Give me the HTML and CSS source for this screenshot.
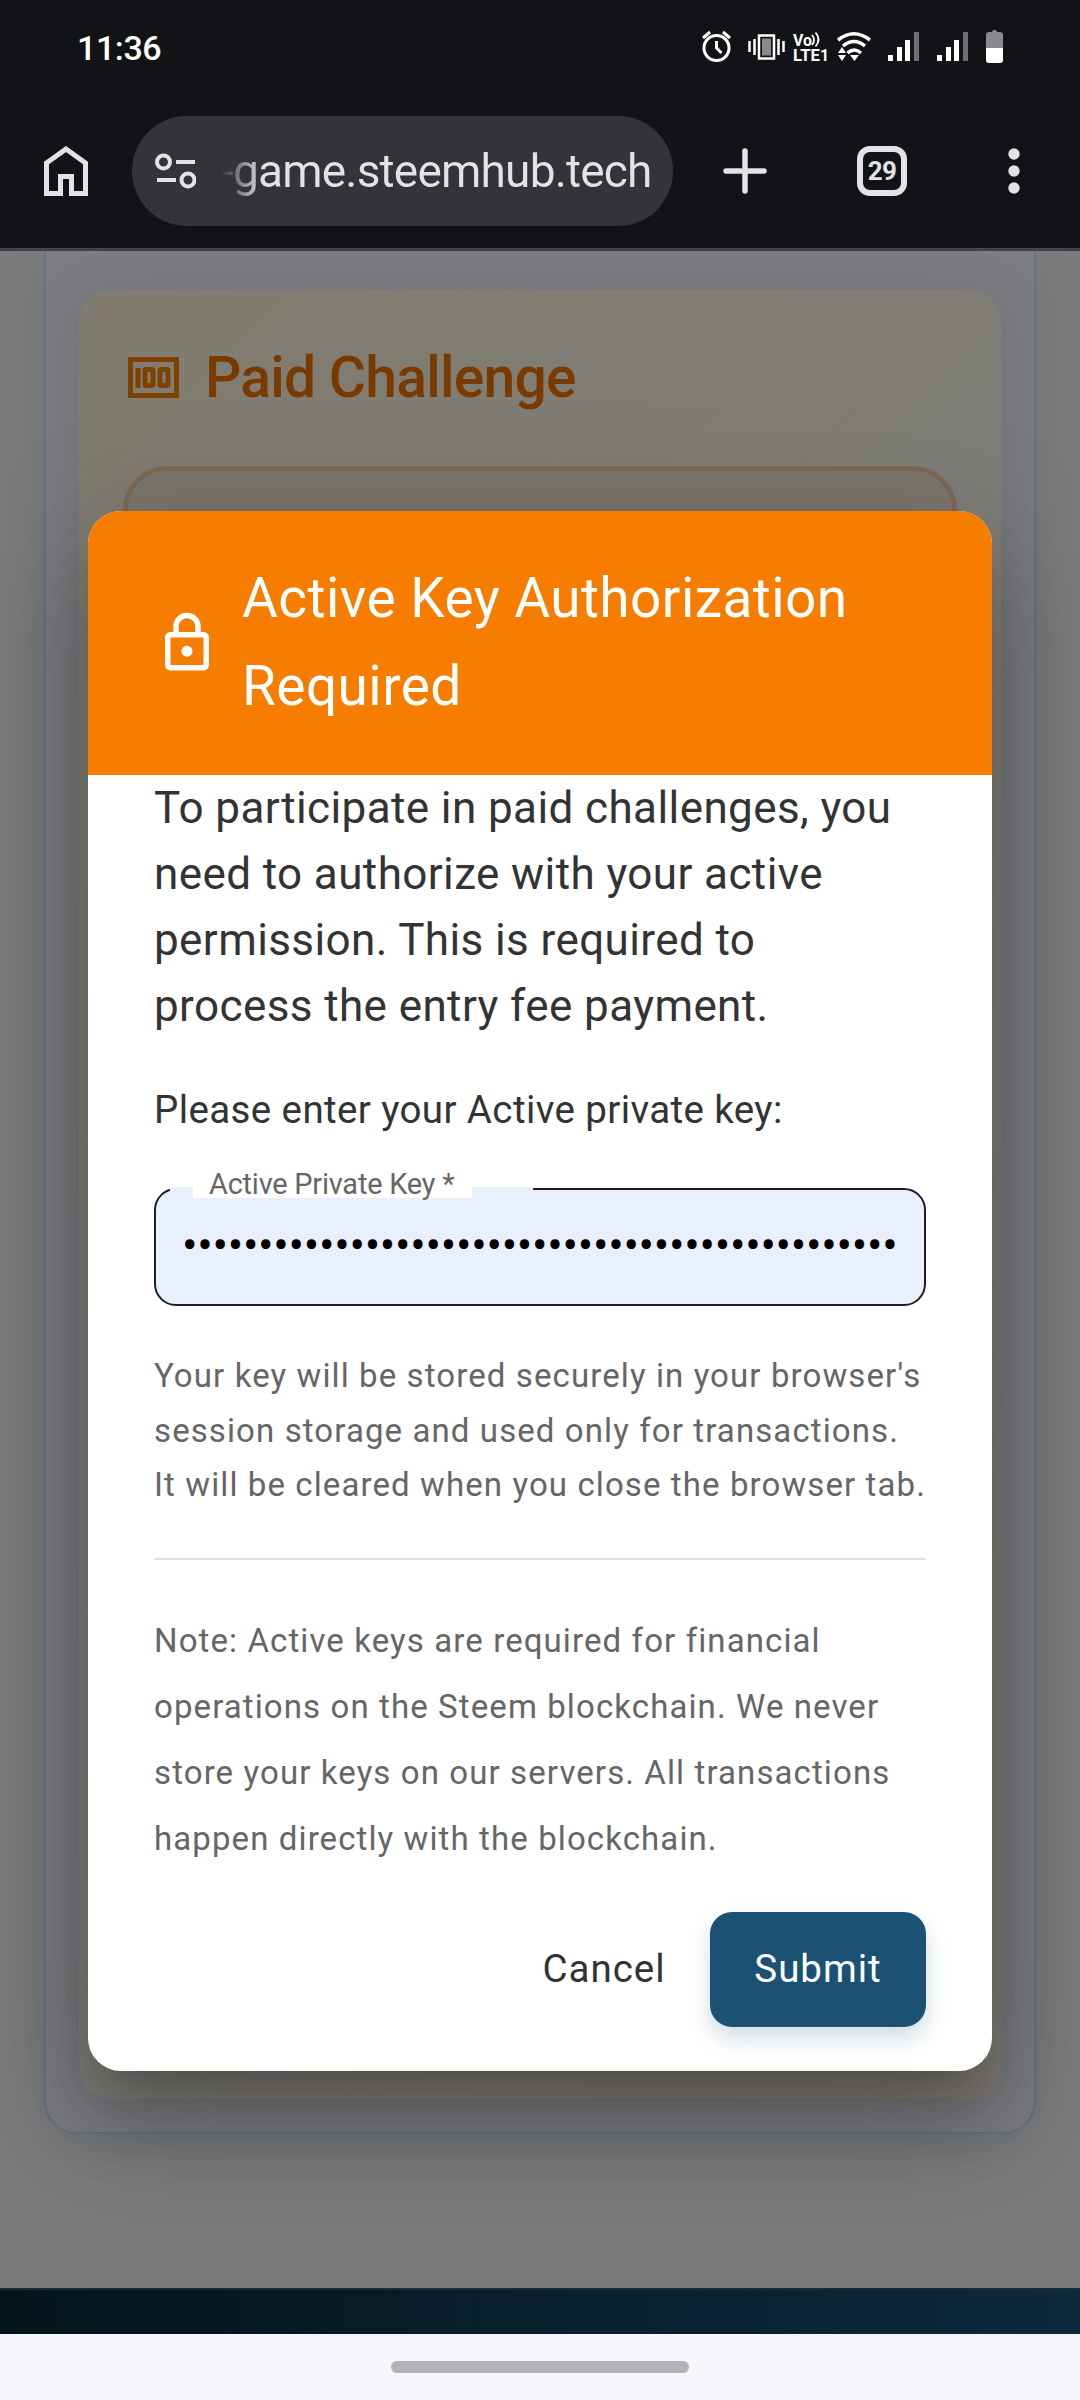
FILE: index.html
```
<!DOCTYPE html>
<html lang="en">

<head>
  <meta charset="UTF-8">
  <title>Paid Challenge</title>
  <link rel="stylesheet" href="styles.css">
</head>

<body>
  <div class="phone">
    <div class="status">
      <span class="time">11:36</span>
      <svg class="status-icons" width="310" height="40" viewBox="0 0 310 40" fill="none">
        <!-- alarm -->
        <g stroke="#fff" stroke-width="3">
          <circle cx="16.500" cy="18" r="12.500"/>
          <path d="M16.500 11v7l5 5M3 8l7-6M30 8l-7-6"/>
        </g>
        <!-- vibrate -->
        <rect x="59" y="5.500" width="15" height="23" stroke="#fff" stroke-width="2.500"/>
        <rect x="62" y="8.500" width="9" height="17" fill="#8a8a8c"/>
        <path d="M49.500 11v11M54.500 9v16M78.500 9v16M83.500 11v11" stroke="#fff" stroke-width="2.500"/>
        <!-- volte -->
        <text class="lte" x="93" y="15.500" textLength="19" lengthAdjust="spacingAndGlyphs">Vo</text>
        <path d="M112 5q4 5 0 10M115.500 2.500q6 7 0 14" stroke="#fff" stroke-width="1.800"/>
        <text class="lte" x="93" y="30.500" textLength="27" lengthAdjust="spacingAndGlyphs">LTE</text>
        <text class="lte" x="120" y="30.500">1</text>
        <!-- wifi -->
        <g stroke="#fff" stroke-width="3.500">
          <path d="M138 10q16-12.500 32 0M143 16q11-9 22 0M147.500 23q7-6 13.500 0"/>
        </g>
        <path d="M138 23l4-6 4 6zM138 25l4 6 4-6zM150 25l4.500 6 4.500-6z" fill="#fff"/>
        <!-- signal -->
        <path d="M188 25h5v6h-5zM197 17h5v14h-5zM205 10h5v21h-5zM237 25h5v6h-5zM246 17h5v14h-5zM254 10h5v21h-5z" fill="#fff"/>
        <path d="M214 2h5v29h-5zM263 2h5v29h-5z" fill="#707073"/>
        <!-- battery -->
        <path d="M286 18V5q0-3 3-3h3q0-2 2-2h1q2 0 2 2h3q3 0 3 3v13z" fill="#8a8a8c"/>
        <path d="M286 18h17v12q0 3-3 3h-11q-3 0-3-3z" fill="#fff"/>
      </svg>
    </div>

    <div class="toolbar">
      <svg class="home" width="44" height="50" viewBox="0 0 44 50">
        <path d="M2.500 47.500V17L22 3l19.500 14v30.500H27.500v-17h-11v17z" fill="none" stroke="#e3e2e8" stroke-width="5"/>
      </svg>
      <div class="address">
        <svg width="42" height="36" viewBox="0 0 42 36" fill="none" stroke="#e3e2e8" stroke-width="4">
          <circle cx="9.500" cy="9" r="6.500"/>
          <circle cx="34" cy="27" r="6.500"/>
          <path d="M22 9h19M3 27h19"/>
        </svg>
        <span class="url">-game.steemhub.tech</span>
      </div>
      <svg class="plus" width="44" height="46" viewBox="0 0 44 46">
        <path d="M22 3v40M3 23h38" stroke="#e3e2e8" stroke-width="5.500" stroke-linecap="round"/>
      </svg>
      <div class="tabs">29</div>
      <svg class="more" width="12" height="46" viewBox="0 0 12 46" fill="#e3e2e8">
        <circle cx="6" cy="6" r="5.700"/>
        <circle cx="6" cy="23" r="5.700"/>
        <circle cx="6" cy="40" r="5.700"/>
      </svg>
    </div>

    <div class="page">
      <div class="panel">
        <div class="challenge">
          <h2>
            <svg width="52" height="42" viewBox="0 0 52 42" fill="none" stroke="#7f4100">
              <rect x="3.500" y="2.500" width="46" height="36" stroke-width="5"/>
              <path d="M11 11v20" stroke-width="5"/>
              <rect x="18" y="12.500" width="8" height="16" rx="1" stroke-width="5"/>
              <rect x="33" y="12.500" width="8" height="16" rx="1" stroke-width="5"/>
            </svg>
            <span>Paid Challenge</span>
          </h2>
          <div class="option"></div>
        </div>
      </div>
      <div class="footer"></div>

      <div class="dialog">
        <div class="dialog-title">
          <svg width="66" height="66" viewBox="0 0 24 24" fill="#fff">
            <path d="M18 8h-1V6c0-2.760-2.240-5-5-5S7 3.240 7 6v2H6c-1.100 0-2 .9-2 2v10c0 1.100.9 2 2 2h12c1.100 0 2-.9 2-2V10c0-1.100-.9-2-2-2zM9 6c0-1.660 1.340-3 3-3s3 1.340 3 3v2H9V6zm9 14H6V10h12v10zm-6-3c1.100 0 2-.9 2-2s-.9-2-2-2-2 .9-2 2 .9 2 2 2z"/>
          </svg>
          <span>Active Key Authorization<br>Required</span>
        </div>
        <div class="dialog-body">
          <p class="intro">To participate in paid challenges, you<br>need to authorize with your active<br>permission. This is required to<br>process the entry fee payment.</p>
          <p class="ask">Please enter your Active private key:</p>
          <div class="field">
            <div class="notch"></div>
            <label>Active Private Key *</label>
            <span class="dots">•••••••••••••••••••••••••••••••••••••••••••••••</span>
          </div>
          <p class="hint">Your key will be stored securely in your browser's<br>session storage and used only for transactions.<br>It will be cleared when you close the browser tab.</p>
          <hr>
          <p class="note">Note: Active keys are required for financial<br>operations on the Steem blockchain. We never<br>store your keys on our servers. All transactions<br>happen directly with the blockchain.</p>
        </div>
        <div class="actions">
          <button class="cancel">Cancel</button>
          <button class="submit">Submit</button>
        </div>
      </div>
    </div>

    <div class="navbar"><div class="handle"></div></div>
  </div>
</body>
</html>
```

FILE: styles.css
```
*{
	box-sizing:border-box;
}
body{
	margin:0;
	font-family:Roboto,"Liberation Sans",sans-serif;
}
.phone{
	width:1080px;
	height:2400px;
	display:flex;
	flex-direction:column;
	overflow:hidden;
	background:#121317;
}

/* status bar */
.status{
	height:98px;
	padding:30px 77px 0 77px;
	display:flex;
	justify-content:space-between;
}
.time{
	color:#fff;
	font-size:34px;
	font-weight:500;
	line-height:37px;
	letter-spacing:-.4px;
}
.status-icons{
	margin-right:-7px;
}
.lte{
	fill:#fff;
	font-size:16px;
	font-weight:700;
}

/* browser toolbar */
.toolbar{
	height:150px;
	padding:0 60px 4px 44px;
	display:flex;
	align-items:center;
}
.address{
	width:541px;
	height:110px;
	margin-left:44px;
	margin-right:50px;
	padding-left:22px;
	display:flex;
	align-items:center;
	border-radius:55px;
	background:#343438;
}
.url{
	margin-left:25px;
	font-size:46px;
	line-height:54px;
	letter-spacing:-.8px;
	white-space:nowrap;
	color:transparent;
	background:linear-gradient(90deg,#343438 0,#e3e2e8 42px);
	-webkit-background-clip:text;
	background-clip:text;
}
.tabs{
	width:50px;
	height:50px;
	margin-left:90px;
	margin-right:101px;
	border:6px solid #e3e2e8;
	border-radius:13px;
	color:#e3e2e8;
	font-size:26px;
	font-weight:700;
	line-height:39px;
	text-align:center;
	letter-spacing:-.7px;
}

/* page under the backdrop */
.page{
	position:relative;
	height:2086px;
	border-top:3px solid #444;
	background:#7b7c7e;
	overflow:hidden;
}
.panel{
	height:1883px;
	margin:0 44px;
	padding:39px 33px 32px;
	border:2px solid #647382;
	border-top:0;
	border-radius:0 0 33px 33px;
	background:#7b7d80;
	box-shadow:0 10px 50px rgba(0,0,0,.06);
}
.challenge{
	height:1809px;
	padding:48px 44px 0;
	border-radius:33px;
	background:linear-gradient(135deg,#817c6f,#7f7e78 40%,#7f7b74);
	box-shadow:0 8px 60px rgba(0,0,0,.1);
}
.challenge h2{
	height:80px;
	margin:0 0 48px;
	padding-left:4px;
	display:flex;
	align-items:center;
	font-size:57px;
	font-weight:500;
	letter-spacing:-.75px;
	color:#793a00;
}
.challenge h2 span{
	margin:-2px 0 0 26px;
}
.option{
	height:1500px;
	border:5px solid #7d6956;
	border-radius:44px;
	background:#7b776d;
}
.footer{
	height:46px;
	margin-top:154px;
	border-top:2px solid #1a2b34;
	background:linear-gradient(90deg,#04151c,#0d293c);
}

/* dialog */
.dialog{
	position:absolute;
	left:88px;
	top:260px;
	width:904px;
	height:1560px;
	border-radius:33px;
	overflow:hidden;
	background:#fff;
	box-shadow:0 30px 41px -19px rgba(0,0,0,.2),0 66px 104px 8px rgba(0,0,0,.14),0 25px 126px 22px rgba(0,0,0,.12);
}
.dialog-title{
	height:264px;
	padding:0 66px;
	display:flex;
	align-items:center;
	background:#f67d00;
	color:#fff;
	font-size:55px;
	line-height:88px;
	letter-spacing:.43px;
}
.dialog-title span{
	margin:-2px 0 0 22px;
}
.dialog-body{
	padding:0 66px;
}
p{
	margin:0;
	white-space:nowrap;
}
.intro{
	color:#333;
	font-size:44px;
	line-height:66px;
	letter-spacing:.4px;
}
.ask{
	margin-top:42px;
	color:#333;
	font-size:38.5px;
	line-height:58px;
	letter-spacing:.39px;
}
.field{
	position:relative;
	width:772px;
	height:118px;
	margin-top:49px;
	padding-left:26px;
	border:2px solid #1c2022;
	border-radius:22px;
	background:#e8effd;
}
.notch{
	position:absolute;
	left:14px;
	top:-3px;
	width:363px;
	height:6px;
	background:#e8effd;
}
.field label{
	position:absolute;
	left:37px;
	top:-27px;
	width:279px;
	height:35px;
	padding-left:16px;
	background:#fff;
	color:#666;
	font-size:28.900px;
	line-height:42px;
	letter-spacing:-.2px;
	white-space:nowrap;
}
.dots{
	display:block;
	line-height:110px;
	font-size:46px;
	letter-spacing:-.3px;
	white-space:nowrap;
	color:#000;
}
.hint{
	margin-top:43px;
	color:#666;
	font-size:33px;
	line-height:54.500px;
	letter-spacing:1.100px;
}
hr{
	height:2px;
	margin:45.500px 0 0;
	border:0;
	background:#e0e0e0;
}
.note{
	margin-top:48px;
	color:#666;
	font-size:33px;
	line-height:66px;
	letter-spacing:1.100px;
}
.actions{
	margin-top:40px;
	padding-right:66px;
	display:flex;
	justify-content:flex-end;
}
button{
	height:115px;
	padding-bottom:3px;
	border:0;
	border-radius:22px;
	font-family:inherit;
	font-size:38.500px;
	letter-spacing:1px;
}
.cancel{
	width:212px;
	background:none;
	color:#333;
}
.submit{
	width:216px;
	background:#1b5274;
	color:#fff;
	box-shadow:0 11px 22px rgba(27,82,116,.2);
}

/* gesture bar */
.navbar{
	flex:1;
	display:flex;
	justify-content:center;
	background:#f5f7fc;
}
.handle{
	width:298px;
	height:12px;
	margin-top:27px;
	border-radius:6px;
	background:#b2b4b3;
}
```
